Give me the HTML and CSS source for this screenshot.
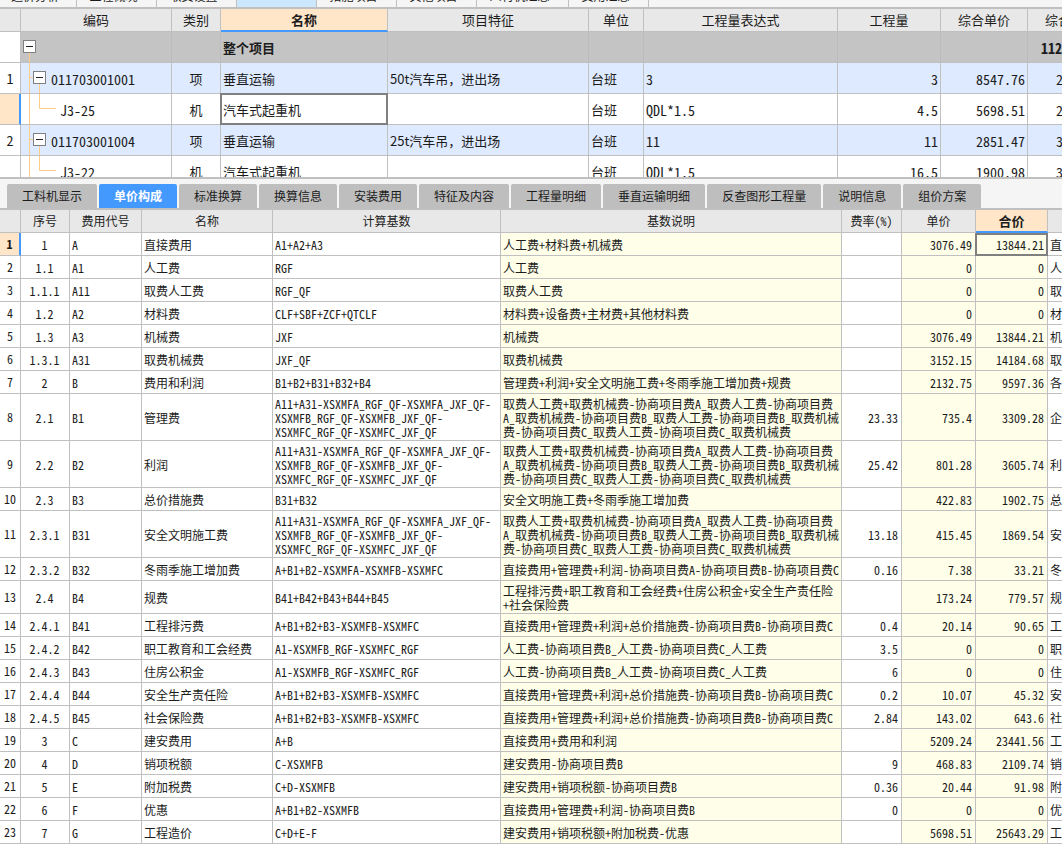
FILE: index.html
```html
<!DOCTYPE html>
<html lang="zh-CN">
<head>
<meta charset="utf-8">
<title>单价构成</title>
<link rel="stylesheet" href="styles.css">
</head>
<body>
<nav class="modules" aria-label="模块">
<button>造价分析</button><button>工程概况</button><button>取费设置</button><button class="on" aria-label="当前模块"></button><button>措施项目</button><button>其他项目</button><button>人材机汇总</button><button>费用汇总</button>
</nav>

<section class="pane">
<table class="grid bill">
<colgroup><col class="w21"><col class="w151"><col class="w49"><col class="w167"><col><col class="w55"><col class="w194"><col class="w103"><col class="w87"><col class="w34"></colgroup>
<thead><tr><th></th><th>编码</th><th>类别</th><th class="cur">名称</th><th>项目特征</th><th>单位</th><th>工程量表达式</th><th>工程量</th><th>综合单价</th><th>综合</th></tr></thead>
<tbody>
<tr class="total"><th></th><td><div class="tree root"><svg class="lines" width="40" height="31"><path d="M8.5 21V31"/></svg><button class="toggle" aria-label="折叠"></button></div></td><td></td><td>整个项目</td><td></td><td></td><td></td><td></td><td></td><td>112</td></tr>
<tr class="item"><th>1</th><td><div class="tree node"><svg class="lines" width="40" height="31"><path d="M8.5 0V31M8 14.5H12M18.5 21V31"/></svg><button class="toggle" aria-label="折叠"></button><span>011703001001</span></div></td><td>项</td><td>垂直运输</td><td>50t汽车吊，进出场</td><td>台班</td><td>3</td><td>3</td><td>8547.76</td><td>2</td></tr>
<tr><th class="cur"></th><td><div class="tree leaf"><svg class="lines" width="40" height="31"><path d="M8.5 0V31M18.5 0V14.5H35"/></svg><span>J3-25</span></div></td><td>机</td><td class="sel">汽车式起重机</td><td></td><td>台班</td><td>QDL*1.5</td><td>4.5</td><td>5698.51</td><td>2</td></tr>
<tr class="item"><th>2</th><td><div class="tree node"><svg class="lines" width="40" height="31"><path d="M8.5 0V31M8 14.5H12M18.5 21V31"/></svg><button class="toggle" aria-label="折叠"></button><span>011703001004</span></div></td><td>项</td><td>垂直运输</td><td>25t汽车吊，进出场</td><td>台班</td><td>11</td><td>11</td><td>2851.47</td><td>3</td></tr>
<tr><th></th><td><div class="tree leaf"><svg class="lines" width="40" height="31"><path d="M8.5 0V31M18.5 0V14.5H35"/></svg><span>J3-22</span></div></td><td>机</td><td>汽车式起重机</td><td></td><td>台班</td><td>QDL*1.5</td><td>16.5</td><td>1900.98</td><td>3</td></tr>
</tbody>
</table>
</section>

<nav class="tabs" aria-label="明细">
<button>工料机显示</button><button class="on">单价构成</button><button>标准换算</button><button>换算信息</button><button>安装费用</button><button>特征及内容</button><button>工程量明细</button><button>垂直运输明细</button><button>反查图形工程量</button><button>说明信息</button><button>组价方案</button>
</nav>

<table class="grid cost">
<colgroup><col class="w21"><col class="w49"><col class="w72"><col class="w131"><col class="w228"><col><col class="w60"><col class="w74"><col class="w72"><col class="w14"></colgroup>
<thead><tr><th></th><th>序号</th><th>费用代号</th><th>名称</th><th>计算基数</th><th>基数说明</th><th>费率(%)</th><th>单价</th><th class="cur">合价</th><th></th></tr></thead>
<tbody>
<tr><th class="cur">1</th><td>1</td><td>A</td><td>直接费用</td><td>A1+A2+A3</td><td>人工费+材料费+机械费</td><td></td><td>3076.49</td><td class="sel">13844.21</td><td>直</td></tr>
<tr><th>2</th><td>1.1</td><td>A1</td><td>人工费</td><td>RGF</td><td>人工费</td><td></td><td>0</td><td>0</td><td>人</td></tr>
<tr><th>3</th><td>1.1.1</td><td>A11</td><td>取费人工费</td><td>RGF_QF</td><td>取费人工费</td><td></td><td>0</td><td>0</td><td>取</td></tr>
<tr><th>4</th><td>1.2</td><td>A2</td><td>材料费</td><td>CLF+SBF+ZCF+QTCLF</td><td>材料费+设备费+主材费+其他材料费</td><td></td><td>0</td><td>0</td><td>材</td></tr>
<tr><th>5</th><td>1.3</td><td>A3</td><td>机械费</td><td>JXF</td><td>机械费</td><td></td><td>3076.49</td><td>13844.21</td><td>机</td></tr>
<tr><th>6</th><td>1.3.1</td><td>A31</td><td>取费机械费</td><td>JXF_QF</td><td>取费机械费</td><td></td><td>3152.15</td><td>14184.68</td><td>取</td></tr>
<tr><th>7</th><td>2</td><td>B</td><td>费用和利润</td><td>B1+B2+B31+B32+B4</td><td>管理费+利润+安全文明施工费+冬雨季施工增加费+规费</td><td></td><td>2132.75</td><td>9597.36</td><td>各</td></tr>
<tr><th>8</th><td>2.1</td><td>B1</td><td>管理费</td><td>A11+A31-XSXMFA_RGF_QF-XSXMFA_JXF_QF-<br>XSXMFB_RGF_QF-XSXMFB_JXF_QF-<br>XSXMFC_RGF_QF-XSXMFC_JXF_QF</td><td>取费人工费+取费机械费-协商项目费A_取费人工费-协商项目费<br>A_取费机械费-协商项目费B_取费人工费-协商项目费B_取费机械<br>费-协商项目费C_取费人工费-协商项目费C_取费机械费</td><td>23.33</td><td>735.4</td><td>3309.28</td><td>企</td></tr>
<tr><th>9</th><td>2.2</td><td>B2</td><td>利润</td><td>A11+A31-XSXMFA_RGF_QF-XSXMFA_JXF_QF-<br>XSXMFB_RGF_QF-XSXMFB_JXF_QF-<br>XSXMFC_RGF_QF-XSXMFC_JXF_QF</td><td>取费人工费+取费机械费-协商项目费A_取费人工费-协商项目费<br>A_取费机械费-协商项目费B_取费人工费-协商项目费B_取费机械<br>费-协商项目费C_取费人工费-协商项目费C_取费机械费</td><td>25.42</td><td>801.28</td><td>3605.74</td><td>利</td></tr>
<tr><th>10</th><td>2.3</td><td>B3</td><td>总价措施费</td><td>B31+B32</td><td>安全文明施工费+冬雨季施工增加费</td><td></td><td>422.83</td><td>1902.75</td><td>总</td></tr>
<tr><th>11</th><td>2.3.1</td><td>B31</td><td>安全文明施工费</td><td>A11+A31-XSXMFA_RGF_QF-XSXMFA_JXF_QF-<br>XSXMFB_RGF_QF-XSXMFB_JXF_QF-<br>XSXMFC_RGF_QF-XSXMFC_JXF_QF</td><td>取费人工费+取费机械费-协商项目费A_取费人工费-协商项目费<br>A_取费机械费-协商项目费B_取费人工费-协商项目费B_取费机械<br>费-协商项目费C_取费人工费-协商项目费C_取费机械费</td><td>13.18</td><td>415.45</td><td>1869.54</td><td>安</td></tr>
<tr><th>12</th><td>2.3.2</td><td>B32</td><td>冬雨季施工增加费</td><td>A+B1+B2-XSXMFA-XSXMFB-XSXMFC</td><td>直接费用+管理费+利润-协商项目费A-协商项目费B-协商项目费C</td><td>0.16</td><td>7.38</td><td>33.21</td><td>冬</td></tr>
<tr><th>13</th><td>2.4</td><td>B4</td><td>规费</td><td>B41+B42+B43+B44+B45</td><td>工程排污费+职工教育和工会经费+住房公积金+安全生产责任险<br>+社会保险费</td><td></td><td>173.24</td><td>779.57</td><td>规</td></tr>
<tr><th>14</th><td>2.4.1</td><td>B41</td><td>工程排污费</td><td>A+B1+B2+B3-XSXMFB-XSXMFC</td><td>直接费用+管理费+利润+总价措施费-协商项目费B-协商项目费C</td><td>0.4</td><td>20.14</td><td>90.65</td><td>工</td></tr>
<tr><th>15</th><td>2.4.2</td><td>B42</td><td>职工教育和工会经费</td><td>A1-XSXMFB_RGF-XSXMFC_RGF</td><td>人工费-协商项目费B_人工费-协商项目费C_人工费</td><td>3.5</td><td>0</td><td>0</td><td>职</td></tr>
<tr><th>16</th><td>2.4.3</td><td>B43</td><td>住房公积金</td><td>A1-XSXMFB_RGF-XSXMFC_RGF</td><td>人工费-协商项目费B_人工费-协商项目费C_人工费</td><td>6</td><td>0</td><td>0</td><td>住</td></tr>
<tr><th>17</th><td>2.4.4</td><td>B44</td><td>安全生产责任险</td><td>A+B1+B2+B3-XSXMFB-XSXMFC</td><td>直接费用+管理费+利润+总价措施费-协商项目费B-协商项目费C</td><td>0.2</td><td>10.07</td><td>45.32</td><td>安</td></tr>
<tr><th>18</th><td>2.4.5</td><td>B45</td><td>社会保险费</td><td>A+B1+B2+B3-XSXMFB-XSXMFC</td><td>直接费用+管理费+利润+总价措施费-协商项目费B-协商项目费C</td><td>2.84</td><td>143.02</td><td>643.6</td><td>社</td></tr>
<tr><th>19</th><td>3</td><td>C</td><td>建安费用</td><td>A+B</td><td>直接费用+费用和利润</td><td></td><td>5209.24</td><td>23441.56</td><td>工</td></tr>
<tr><th>20</th><td>4</td><td>D</td><td>销项税额</td><td>C-XSXMFB</td><td>建安费用-协商项目费B</td><td>9</td><td>468.83</td><td>2109.74</td><td>销</td></tr>
<tr><th>21</th><td>5</td><td>E</td><td>附加税费</td><td>C+D-XSXMFB</td><td>建安费用+销项税额-协商项目费B</td><td>0.36</td><td>20.44</td><td>91.98</td><td>附</td></tr>
<tr><th>22</th><td>6</td><td>F</td><td>优惠</td><td>A+B1+B2-XSXMFB</td><td>直接费用+管理费+利润-协商项目费B</td><td>0</td><td>0</td><td>0</td><td>优</td></tr>
<tr><th>23</th><td>7</td><td>G</td><td>工程造价</td><td>C+D+E-F</td><td>建安费用+销项税额+附加税费-优惠</td><td></td><td>5698.51</td><td>25643.29</td><td>工</td></tr>
</tbody>
</table>
</body>
</html>
```
FILE: styles.css
```css
:root {
  --line: #c0c0c0;
  --head: #e8e8e8;
  --accent: #4499ff;
  --peach: #ffe6c8;
  --yellow: #ffffe9;
  --blue: #deeaff;
}

* { box-sizing: border-box; }

body {
  margin: 0;
  background: #fff;
  color: #1c1c1c;
  font-family: "Noto Sans CJK SC", sans-serif;
  font-size: 12px;
  line-height: 14px;
}

button {
  font: inherit;
  color: inherit;
  border: 0;
  padding: 0;
  background: none;
}

/* module strip, scrolled mostly out of view */
.modules {
  display: flex;
  align-items: flex-end;
  height: 7px;
  overflow: hidden;
  background: #f5f5f5;
}

.modules button {
  flex: none;
  width: 80px;
  height: 22px;
  padding-right: 6px;
  border-right: 1px solid var(--line);
}

.modules button:first-child { width: 77px; }
.modules button:nth-child(7) { width: 92px; }
.modules .on { background: #cce8ff; }

/* grids */
.grid {
  width: 100%;
  table-layout: fixed;
  border-collapse: separate;
  border-spacing: 0;
  font-feature-settings: "hwid" 1;
}

.grid th,
.grid td {
  border-right: 1px solid var(--line);
  border-bottom: 1px solid var(--line);
  font-weight: 400;
  white-space: nowrap;
  overflow: hidden;
  vertical-align: middle;
}

.grid thead th { background: var(--head); padding: 0; }
.grid tbody th { padding: 0; background: #fff; text-align: center; }

.grid thead .cur {
  background: var(--peach);
  border-bottom: 2px solid var(--accent);
  font-weight: 700;
}

.grid tbody .cur {
  background: var(--peach);
  border-right: 2px solid var(--accent);
  font-weight: 700;
}

.grid .sel {
  position: relative;
  overflow: visible;
}

.sel::after {
  content: "";
  position: absolute;
  inset: -1px;
  border: 2px solid #808080;
}

.w14 { width: 14px; }
.w21 { width: 21px; }
.w34 { width: 34px; }
.w49 { width: 49px; }
.w55 { width: 55px; }
.w60 { width: 60px; }
.w72 { width: 72px; }
.w74 { width: 74px; }
.w87 { width: 87px; }
.w103 { width: 103px; }
.w131 { width: 131px; }
.w151 { width: 151px; }
.w167 { width: 167px; }
.w194 { width: 194px; }
.w228 { width: 228px; }

/* bill of quantities */
.pane {
  height: 172px;
  overflow: hidden;
  border-top: 2px solid var(--line);
  border-bottom: 2px solid var(--line);
}

.bill { font-size: 13px; }
.bill thead tr { height: 23px; }
.bill tbody tr { height: 31px; }
.bill td { padding: 2px 2px 0; }
.bill td:nth-child(2) { padding: 0; }
.bill td:nth-child(3) { text-align: center; }
.bill td:nth-child(5) { font-feature-settings: normal; }
.bill tbody th,
.bill .tree,
.bill td:nth-child(7),
.bill td:nth-child(8),
.bill td:nth-child(9),
.bill td:nth-child(10) { font-size: 14px; }
.bill td:nth-child(8),
.bill td:nth-child(9) { text-align: right; }
.bill th:last-child { padding-left: 17px; text-align: left; }
.bill th:last-child,
.bill td:last-child { border-right: 0; }
.bill td:last-child { padding-left: 28px; }
.bill .total td { background: #c4c4c4; font-weight: 700; border-right-color: #bcbcbc; }
.bill .total td:last-child { padding-left: 13px; }
.bill .item td { background: var(--blue); }

.tree {
  position: relative;
  display: flex;
  align-items: center;
  height: 30px;
}

.tree span { padding-top: 2px; }
.root { padding-left: 2px; }
.node { padding-left: 12px; gap: 5px; }
.leaf { padding-left: 39px; }

.lines {
  position: absolute;
  left: 0;
  top: 0;
  fill: none;
  stroke: #ffcc88;
}

.toggle {
  position: relative;
  width: 13px;
  height: 13px;
  margin-bottom: 1px;
  border: 1px solid #808080;
  background: linear-gradient(#222, #222) center / 7px 1px no-repeat #fff;
}

/* detail tabs */
.tabs {
  display: flex;
  gap: 2px;
  padding: 5px 7px 0;
  background: #f5f5f5;
  border-bottom: 2px solid var(--line);
}

.tabs button {
  flex: none;
  height: 24px;
  padding: 0 15px;
  border-radius: 2px 2px 0 0;
  background: #bebebe;
}

.tabs .on {
  background: var(--accent);
  color: #fff;
  font-weight: 700;
}

/* cost composition */
.cost thead tr,
.cost tbody tr { height: 23px; }
.cost thead .cur { font-size: 13px; }
.cost .sel::after { top: 0; }
.cost td { padding: 3px 3px 1px 2px; }
.cost td:nth-child(2) { text-align: center; }
.cost td:nth-child(7),
.cost td:nth-child(8),
.cost td:nth-child(9) { text-align: right; }
.cost td:nth-child(6),
.cost td:nth-child(8),
.cost td:nth-child(9) { background: var(--yellow); }
.cost th:last-child,
.cost td:last-child { border-right: 0; }
.cost td:nth-child(6) { padding-right: 0; }
```
